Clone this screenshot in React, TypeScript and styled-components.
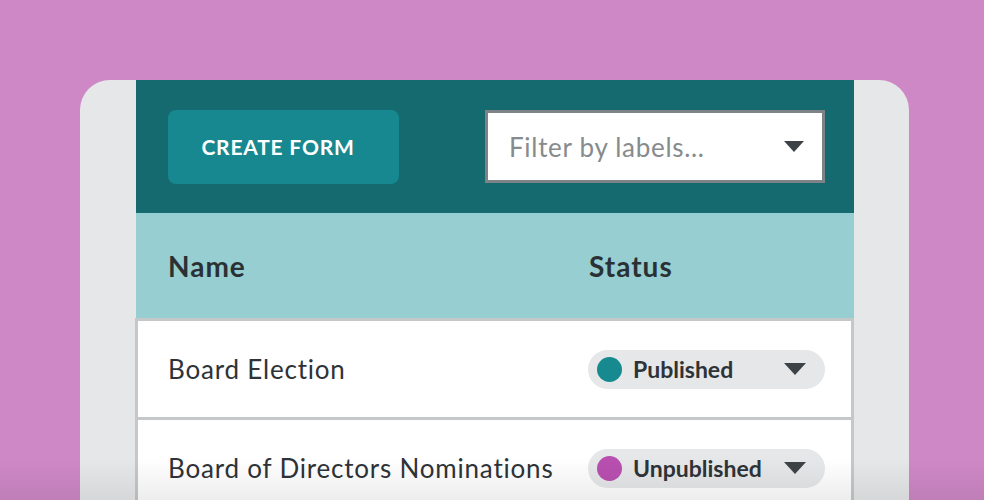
import React from "react";
import styled, { createGlobalStyle } from "styled-components";

const GlobalStyle = createGlobalStyle`
    html, body {
        margin: 0;
        padding: 0;
        background: #ce88c6;
        font-family: "Lato", "Noto Sans", sans-serif;
    }
`

const Page = styled.div`
    position: relative;
    height: 500px;
    overflow: hidden;
    padding: 80px 0 0 80px;
    box-sizing: border-box;
`

const Frame = styled.div`
    width: 829px;
    height: 420px;
    box-sizing: border-box;
    background: #e6e7e9;
    border-radius: 30px 30px 0 0;
    padding: 0 55px 0 56px;
`

const Panel = styled.div`
    height: 100%;
    background: #e6e7e9;
    display: flex;
    flex-direction: column;
`

const Toolbar = styled.div`
    height: 133px;
    flex-shrink: 0;
    background: #146a6f;
    display: flex;
    justify-content: space-between;
    align-items: center;
    padding: 0 29px 0 32px;
`

const CreateButton = styled.button`
    width: 231px;
    height: 74px;
    border: none;
    border-radius: 8px;
    background: #17888f;
    color: #fff;
    font-family: inherit;
    font-weight: 700;
    font-size: 21px;
    letter-spacing: 0.8px;
    padding: 0 11px 0 0;
    cursor: pointer;
`

const FilterSelect = styled.div`
    width: 340px;
    height: 73px;
    box-sizing: border-box;
    border: 3px solid #7d8386;
    background: #fff;
    display: flex;
    align-items: center;
    justify-content: space-between;
    padding: 0 18px 0 21px;
    color: #868b8d;
    font-size: 26px;
    letter-spacing: 0.7px;
`

const Caret = styled.span<{ size?: number }>`
    width: 0;
    height: 0;
    border-left: ${({ size }) => size ?? 10}px solid transparent;
    border-right: ${({ size }) => size ?? 10}px solid transparent;
    border-top: ${({ size }) => (size ?? 10) * 1.1}px solid #3d4247;
`

const HeadRow = styled.div`
    height: 105px;
    flex-shrink: 0;
    background: #96ced1;
    display: grid;
    grid-template-columns: 421px 1fr;
    align-items: center;
    padding-left: 32px;
    color: #2a3135;
    font-size: 28px;
    font-weight: 700;
    letter-spacing: 1px;
`

const Row = styled.div`
    height: 102px;
    flex-shrink: 0;
    box-sizing: border-box;
    background: #fff;
    border: 3px solid #c5c8c8;
    margin-left: -1px;
    display: grid;
    grid-template-columns: 420px 237px;
    align-items: center;
    padding-left: 30px;

    & + & {
        margin-top: -3px;
    }
`

const RowName = styled.span`
    color: #2e3337;
    font-size: 26px;
    letter-spacing: 0.8px;
`

const StatusPill = styled.div`
    height: 39px;
    border-radius: 20px;
    background: #e6e7e9;
    display: flex;
    align-items: center;
    padding: 0 19px 0 9px;
    color: #2e3337;
    font-size: 23px;
    font-weight: 700;
`

const Dot = styled.span<{ color: string }>`
    width: 25px;
    height: 25px;
    border-radius: 50%;
    background: ${({ color }) => color};
    margin-right: 11px;
    flex-shrink: 0;
`

const PillLabel = styled.span`
    flex: 1;
`

const BottomFade = styled.div`
    position: absolute;
    left: 0;
    right: 0;
    bottom: 0;
    height: 42px;
    background: linear-gradient(to bottom, rgba(0, 0, 0, 0), rgba(0, 0, 0, 0.07));
    pointer-events: none;
`

const forms = [
    { name: "Board Election", status: "Published", color: "#178a90" },
    { name: "Board of Directors Nominations", status: "Unpublished", color: "#b94fb0" },
];

const App: React.FC = () => {
    return (
        <>
            <GlobalStyle />
            <Page>
                <Frame>
                    <Panel>
                        <Toolbar>
                            <CreateButton>CREATE FORM</CreateButton>
                            <FilterSelect>
                                <span>Filter by labels...</span>
                                <Caret />
                            </FilterSelect>
                        </Toolbar>
                        <HeadRow>
                            <span>Name</span>
                            <span>Status</span>
                        </HeadRow>
                        {forms.map((f) => (
                            <Row key={f.name}>
                                <RowName>{f.name}</RowName>
                                <StatusPill>
                                    <Dot color={f.color} />
                                    <PillLabel>{f.status}</PillLabel>
                                    <Caret size={11.5} />
                                </StatusPill>
                            </Row>
                        ))}
                    </Panel>
                </Frame>
                <BottomFade />
            </Page>
        </>
    )
}

export default App;
